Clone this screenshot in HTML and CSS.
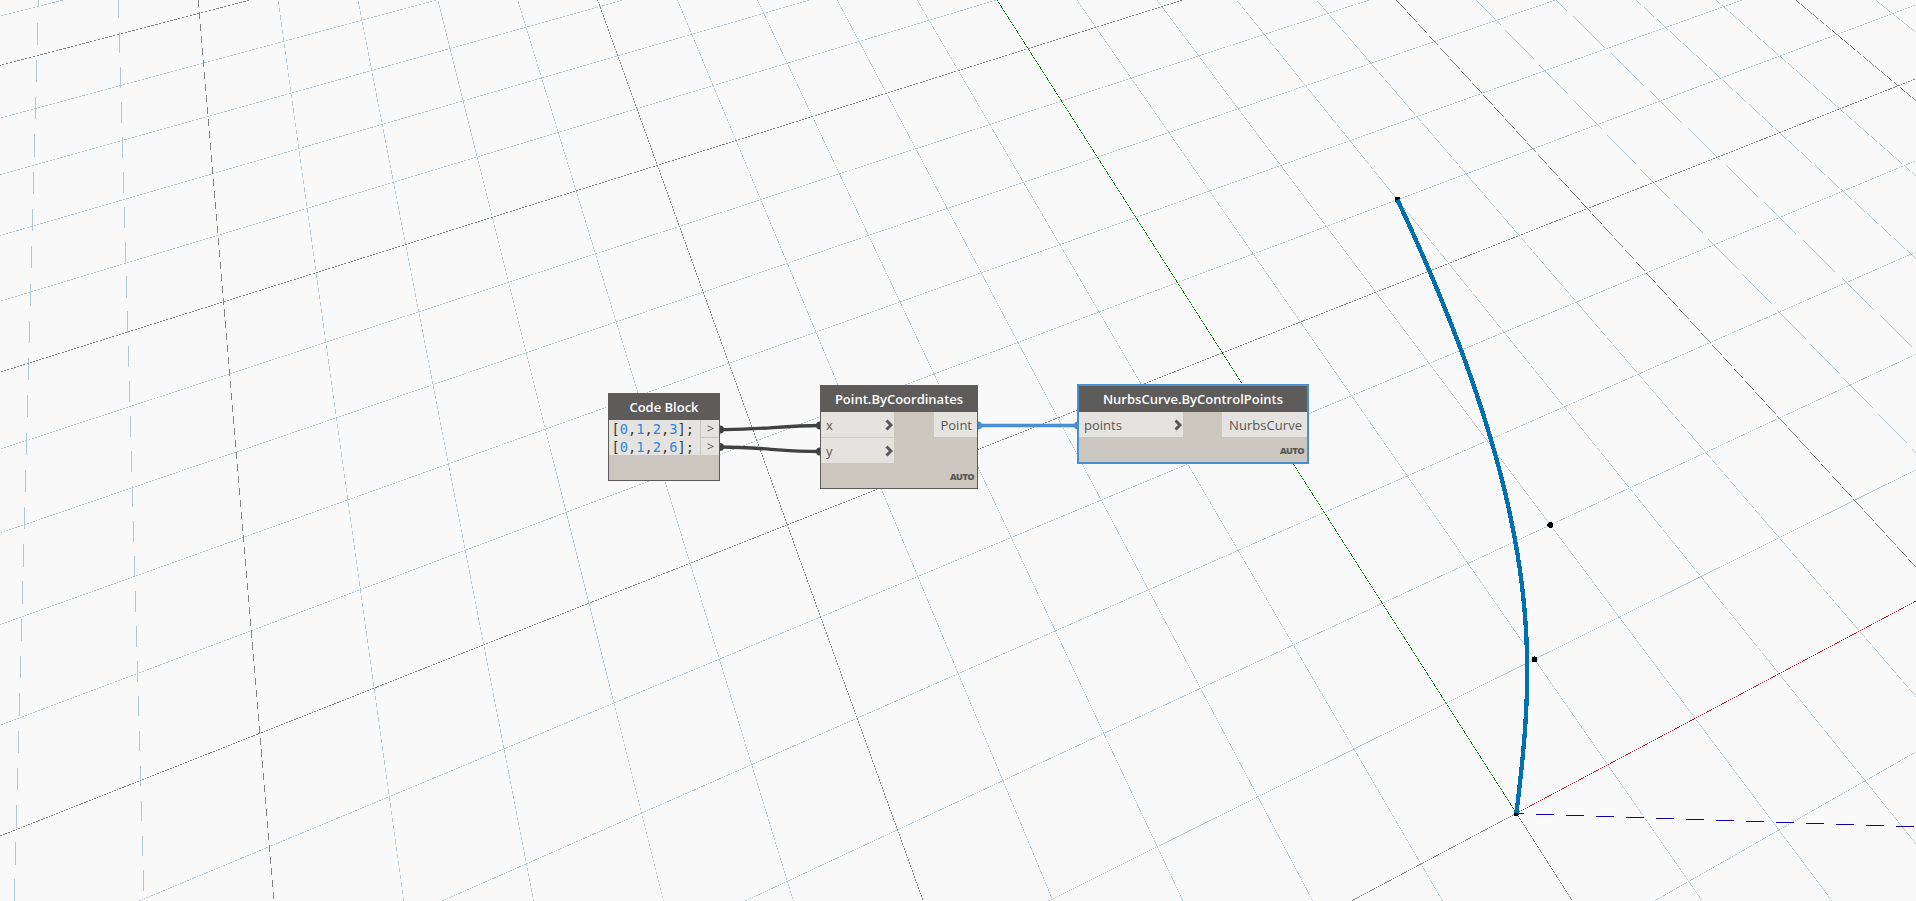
FILE: index.html
```html
<!DOCTYPE html>
<html lang="en">
<head>
<meta charset="utf-8">
<title>Workspace</title>
<link rel="stylesheet" href="styles.css">
</head>
<body>
<main class="workspace">
  <svg class="scene" id="scene" viewBox="0 0 1916 901" width="1916" height="901"></svg>

  <svg class="wires" viewBox="0 0 1916 901" width="1916" height="901">
    <g class="wire">
      <path d="M721 429.5C760 430 782 425.500 820 425.500"/>
      <path d="M721 447C760 447 782 451.500 820 451.500"/>
      <path d="M720 425.500a4 4 0 0 1 0 8zM720 443a4 4 0 0 1 0 8zM820 421.500a4 4 0 0 0 0 8zM820 447.500a4 4 0 0 0 0 8z" class="cap"/>
    </g>
    <g class="wire wire-selected">
      <path d="M978 425.500H1078"/>
      <path d="M978 421.500a4 4 0 0 1 0 8zM1078 421.500a4 4 0 0 0 0 8z" class="cap"/>
    </g>
  </svg>

  <section class="node code-block">
    <h2 class="title">Code Block</h2>
    <div class="code-body">
      <pre class="code">[<b>0</b>,<b>1</b>,<b>2</b>,<b>3</b>];
[<b>0</b>,<b>1</b>,<b>2</b>,<b>6</b>];</pre>
      <div class="code-outs"><span>&gt;</span><span>&gt;</span></div>
    </div>
  </section>

  <section class="node point-node">
    <h2 class="title">Point.ByCoordinates</h2>
    <div class="ports">
      <div class="ins">
        <div class="port">x<svg class="chev" viewBox="0 0 8 12"><path d="M1.500 1.500L6 6L1.500 10.500"/></svg></div>
        <div class="port">y<svg class="chev" viewBox="0 0 8 12"><path d="M1.500 1.500L6 6L1.500 10.500"/></svg></div>
      </div>
      <div class="outs"><div class="port">Point</div></div>
    </div>
    <div class="lacing">AUTO</div>
  </section>

  <section class="node curve-node selected">
    <h2 class="title">NurbsCurve.ByControlPoints</h2>
    <div class="ports">
      <div class="ins">
        <div class="port">points<svg class="chev" viewBox="0 0 8 12"><path d="M1.500 1.500L6 6L1.500 10.500"/></svg></div>
      </div>
      <div class="outs"><div class="port">NurbsCurve</div></div>
    </div>
    <div class="lacing">AUTO</div>
  </section>
</main>
<script src="scene.js"></script>
</body>
</html>
```
FILE: styles.css
```css
body { margin: 0; background: #f9f9f9; overflow: hidden; font-family: "Open Sans", "Noto Sans", sans-serif; }
.workspace { position: relative; width: 1916px; height: 901px; overflow: hidden; background: #f9f9f9; }
.scene, .wires { position: absolute; left: 0; top: 0; }

.grid-line { stroke: none; shape-rendering: crispEdges; }
.minor { fill: #b3c7d4; }
.major { fill: #828289; }
.axis-x { fill: #c80a20; }
.axis-y { fill: #006a00; }
.axis-z { fill: #1400a8; }
.curve { fill: none; stroke: #0070b0; stroke-width: 4.3; shape-rendering: crispEdges; }
.dot { fill: #000; shape-rendering: crispEdges; }

.wire { fill: none; stroke: #414141; stroke-width: 3.3; }
.wire .cap { fill: #414141; stroke: none; }
.wire-selected { stroke: #4a90d0; }
.wire-selected .cap { fill: #4a90d0; }

.node { position: absolute; box-sizing: border-box; display: flex; flex-direction: column; background: #cbc6be; border: 1px solid #5e5c5a; color: #5a5856; }
.title { margin: 0; height: 26px; flex: none; background: #5e5c5a; color: #fff; font-size: 13px; line-height: 27px; font-weight: 600; text-align: center; white-space: nowrap; }
.code-block { left: 608px; top: 393px; width: 112px; height: 88px; }
.point-node { left: 820px; top: 385px; width: 158px; height: 104px; }
.curve-node { left: 1078px; top: 385px; width: 230px; height: 78px; }
.selected { outline: 1px solid #4a90d0; border-color: #4a90d0; outline-offset: 0; }

.code-body { display: flex; height: 35px; background: #e5e3df; }
.code { margin: 0; flex: 1; padding-left: 2.5px; font: 13.7px/18px "DejaVu Sans Mono", monospace; color: #383838; }
.code b { font-weight: 400; color: #2f86dc; }
.code-outs { width: 18px; border-left: 1px solid #c8c6c2; display: grid; grid-template-rows: 1fr 1fr; font-size: 13px; line-height: 17px; text-align: center; }
.code-outs span { padding-left: 1px; }
.code-outs span + span { border-top: 1px solid #c8c6c2; }

.ports { display: flex; justify-content: space-between; }
.port { box-sizing: border-box; display: flex; align-items: center; justify-content: space-between; height: 25px; padding: 0 5px; font-size: 13px; background: #e5e3df; }
.port + .port { margin-top: 1px; background-clip: padding-box; }
.ins { width: 73px; background: #cfccc6; }
.ins .port { padding-right: 1px; }
.outs .port { padding-left: 6px; }
.curve-node .ins { width: 104px; }
.curve-node .outs .port { padding-left: 7px; letter-spacing: 0.04px; }
.chev { width: 8px; height: 12px; fill: none; stroke: #5a5856; stroke-width: 3; }
.lacing { margin-top: auto; padding: 0 3px 4px 0; font-size: 9.2px; line-height: 14px; font-weight: 800; letter-spacing: -0.6px; text-align: right; }
```
FILE: scene.js
```js
// World (grid) coordinates paired with their screen positions.
const anchors = [
  [0, 0, 1516.3, 813.3], [10, 5, 1898, 86], [5, 5, 1588.2, 209], [0, 5, 1222.4, 352.3],
  [0, 10, 1027.8, 49], [-5, 5, 786.9, 525], [-5, 10, 657.1, 165.7], [-10, 5, 259.6, 733.3],
  [-10, 10, 223.3, 301.7], [-10, 15, 200, 12.7], [4, 0, 1860.5, 631], [5, 1, 1853.6, 500],
  [1, 1, 1534.4, 659], [2, 2, 1550.3, 525], [3, 6, 1397.6, 199.3],
  [-11, 5, 140.69, 781.2], [-11, 10, 127.8, 332.3], [-11, 15, 119.26, 34],
  [-12, 5, 16.19, 829.3], [-12, 10, 28.69, 363], [-12, 15, 36.9, 56]
];

// Least-squares plane projection fitted to the anchors.
function fit(points) {
  const m = Array.from({ length: 8 }, () => Array(9).fill(0));
  const add = (row, rhs, weight) => {
    for (let i = 0; i < 8; i++) {
      for (let j = 0; j < 8; j++) m[i][j] += weight * row[i] * row[j];
      m[i][8] += weight * row[i] * rhs;
    }
  };
  for (const [x, y, u, v] of points) {
    add([x, y, 1, 0, 0, 0, -u * x, -u * y], u, x < -10 ? 8 : 1);
    add([0, 0, 0, x, y, 1, -v * x, -v * y], v, 1);
  }
  for (let i = 0; i < 8; i++) {
    let p = i;
    for (let r = i; r < 8; r++) if (Math.abs(m[r][i]) > Math.abs(m[p][i])) p = r;
    [m[i], m[p]] = [m[p], m[i]];
    for (let r = 0; r < 8; r++) {
      if (r === i) continue;
      const f = m[r][i] / m[i][i];
      for (let c = i; c < 9; c++) m[r][c] -= f * m[i][c];
    }
  }
  return m.map((row, i) => row[8] / row[i]);
}

const h = fit(anchors);
const depth = (x, y) => h[6] * x + h[7] * y + 1;
const project = (x, y) => {
  const w = depth(x, y);
  return [(h[0] * x + h[1] * y + h[2]) / w, (h[3] * x + h[4] * y + h[5]) / w];
};

const scene = document.getElementById("scene");
function draw(d, cls) {
  const p = document.createElementNS("http://www.w3.org/2000/svg", "path");
  p.setAttribute("d", d);
  p.setAttribute("class", cls);
  scene.append(p);
}

// Sub-pixel quad: without smoothing it breaks up into dots and dashes.
function thin([ax, ay], [bx, by], cls) {
  const len = Math.hypot(bx - ax, by - ay);
  const nx = -(by - ay) / len * 0.3, ny = (bx - ax) / len * 0.3;
  draw(`M${ax + nx} ${ay + ny}L${bx + nx} ${by + ny}L${bx - nx} ${by - ny}L${ax - nx} ${ay - ny}z`, "grid-line " + cls);
}

// Draws a world segment, keeping only the part in front of the camera.
function line(x0, y0, x1, y1, cls) {
  const near = 0.12;
  let a = depth(x0, y0), b = depth(x1, y1);
  if (a < near && b < near) return;
  if (a < near) { const t = (near - a) / (b - a); x0 += (x1 - x0) * t; y0 += (y1 - y0) * t; }
  if (b < near) { const t = (near - b) / (a - b); x1 += (x0 - x1) * t; y1 += (y0 - y1) * t; }
  thin(project(x0, y0), project(x1, y1), cls);
}

for (const major of [false, true]) {
  for (let i = -40; i <= 40; i++) {
    if ((i % 5 === 0) !== major) continue;
    const cls = major ? "major" : "minor";
    if (i === 0) {
      line(0, -10, 0, 0, cls);
      line(-40, 0, 0, 0, cls);
    } else {
      line(i, -10, i, 40, cls);
      line(-40, i, 40, i, cls);
    }
  }
}
line(0, 0, 0, 40, "axis-y");
line(0, 0, 40, 0, "axis-x");
thin([1516, 813.53], [1920, 827], "axis-z");

const control = [[0, 0], [1, 1], [2, 2], [3, 6]];
for (const [x, y] of control) {
  const [u, v] = project(x, y);
  draw(`M${u - 2.9} ${v}a2.900 2.900 0 1 0 5.800 0a2.900 2.900 0 1 0 -5.800 0z`, "dot");
}

const curve = [];
for (let i = 0; i <= 40; i++) {
  const t = i / 40, s = 1 - t;
  const k = [s * s * s, 3 * s * s * t, 3 * s * t * t, t * t * t];
  curve.push(project(
    k.reduce((sum, w, j) => sum + w * control[j][0], 0),
    k.reduce((sum, w, j) => sum + w * control[j][1], 0)
  ));
}
draw("M" + curve.join("L"), "curve");
```
